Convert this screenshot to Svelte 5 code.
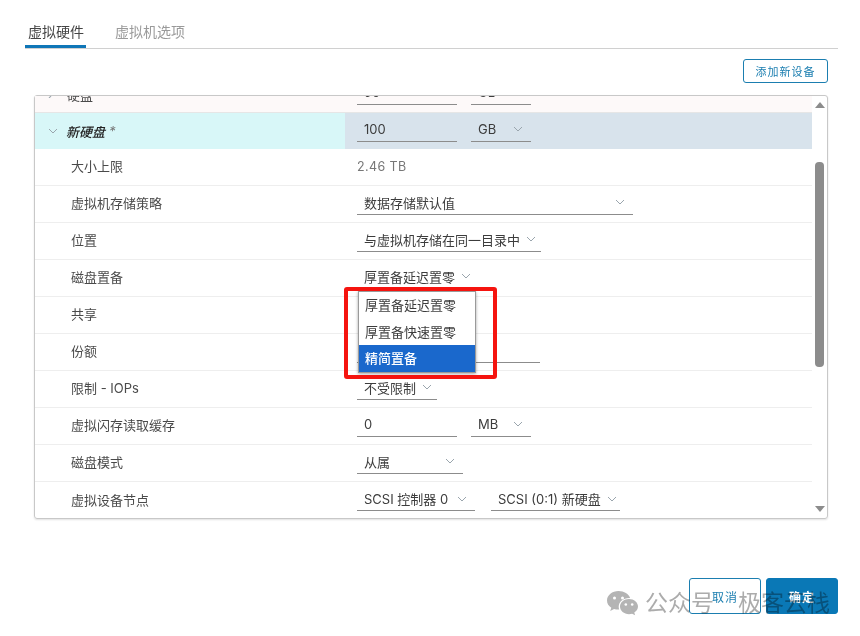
<script lang="ts">
  // Row data for the hardware list; each control is { text, width, chevron?, tight?, noline?, offset? }
  const rows = [
    { label: '大小上限', plain: '2.46 TB' },
    { label: '虚拟机存储策略', controls: [{ text: '数据存储默认值', width: 276, chevron: true }] },
    { label: '位置', controls: [{ text: '与虚拟机存储在同一目录中', width: 184, chevron: true, tight: true }] },
    { label: '磁盘置备', controls: [{ text: '厚置备延迟置零', width: 119, chevron: true, tight: true, noline: true }] },
    { label: '共享', controls: [] },
    { label: '份额', controls: [{ text: '', width: 183 }] },
    { label: '限制 - IOPs', controls: [{ text: '不受限制', width: 80, chevron: true, tight: true }] },
    {
      label: '虚拟闪存读取缓存',
      controls: [
        { text: '0', width: 100 },
        { text: 'MB', width: 60, chevron: true },
      ],
    },
    { label: '磁盘模式', controls: [{ text: '从属', width: 106, chevron: true }] },
    {
      label: '虚拟设备节点',
      controls: [
        { text: 'SCSI 控制器 0', width: 118, chevron: true },
        { text: 'SCSI (0:1) 新硬盘', width: 129, chevron: true, tight: true, offset: 2 },
      ],
    },
  ];
  const options = ['厚置备延迟置零', '厚置备快速置零', '精简置备'];
</script>

{#snippet chevron()}
  <svg class="chev" width="10" height="6" viewBox="0 0 10 6" aria-hidden="true">
    <path d="M1 1l4 4 4-4" fill="none" stroke="#9aa5ad" stroke-width="1" />
  </svg>
{/snippet}

{#snippet control(c)}
  <div
    class="ctl"
    class:tight={c.tight}
    class:noline={c.noline}
    style="width: {c.width}px; margin-left: {c.offset ?? 0}px"
  >
    <span>{c.text}</span>
    {#if c.chevron}{@render chevron()}{/if}
  </div>
{/snippet}

<div class="page">
  <nav class="tabs">
    <div class="tab on">虚拟硬件</div>
    <div class="tab">虚拟机选项</div>
  </nav>

  <div class="toolbar">
    <button class="btn small">添加新设备</button>
  </div>

  <div class="panel">
    <div class="list">
      <div class="row clipped">
        <div class="cell-label head-label"><span class="arrow-r">›</span>硬盘 *</div>
        <div class="cell-value">
          {@render control({ text: '90', width: 100 })}
          {@render control({ text: 'GB', width: 60 })}
        </div>
      </div>

      <div class="row selected">
        <div class="cell-label head-label">
          {@render chevron()}
          <em>新硬盘</em><i class="star">*</i>
        </div>
        <div class="cell-value">
          {@render control({ text: '100', width: 100 })}
          {@render control({ text: 'GB', width: 60, chevron: true })}
        </div>
      </div>

      {#each rows as r}
        <div class="row">
          <div class="cell-label">{r.label}</div>
          <div class="cell-value">
            {#if r.plain}
              <span class="plain">{r.plain}</span>
            {:else}
              {#each r.controls as c}
                {@render control(c)}
              {/each}
            {/if}
          </div>
        </div>
      {/each}
    </div>

    <div class="scrollbar">
      <span class="tri up"></span>
      <div class="track"><div class="thumb"></div></div>
      <span class="tri down"></span>
    </div>

    <div class="popup">
      {#each options as o, i}
        <div class="opt" class:active={i === 2}>{o}</div>
      {/each}
    </div>
    <div class="redbox"></div>
  </div>

  <footer class="foot">
    <button class="btn big">取消</button>
    <button class="btn big primary">确定</button>
  </footer>

  <div class="watermark">
    <svg width="31" height="25" viewBox="0 0 31 25" aria-hidden="true">
      <path fill="#b4b4b4" d="M11.5 0C5.2 0 0 4.2 0 9.5c0 3 1.700 5.600 4.300 7.300L3.200 20l3.900-2c1.300.4 2.700.6 4.100.6l1 0c-.3-.9-.5-1.800-.5-2.800 0-4.900 4.700-8.800 10.400-8.800l1 0C21.900 2.900 17.100 0 11.500 0z" />
      <path fill="#b4b4b4" d="M22 8c-5 0-9 3.400-9 7.600s4 7.600 9 7.600c1.100 0 2.100-.2 3.100-.5l3 1.600-.8-2.700c2.200-1.400 3.700-3.500 3.700-6C31 11.400 27 8 22 8z" />
      <circle cx="7.500" cy="7" r="1.500" fill="#fff" />
      <circle cx="15.500" cy="7" r="1.500" fill="#fff" />
      <circle cx="18.800" cy="13.500" r="1.300" fill="#fff" />
      <circle cx="25.200" cy="13.500" r="1.300" fill="#fff" />
    </svg>
    <span>公众号</span><span class="wm-gap"></span><span>极客云栈</span>
  </div>
</div>

<style>
  :global(body) {
    margin: 0;
    background: #fff;
  }
  .page {
    position: relative;
    width: 860px;
    height: 636px;
    overflow: hidden;
    background: #fff;
    font-family: Inter, 'Noto Sans CJK SC', sans-serif;
    font-size: 13px;
    color: #4a4a4a;
    white-space: nowrap;
    filter: blur(0.3px);
  }
  .tabs {
    display: flex;
    gap: 26px;
    margin: 0 22px 0 25px;
    padding-top: 19px;
    height: 29px;
    border-bottom: 1px solid #d0d0d0;
  }
  .tab {
    padding: 0 3px;
    height: 29px;
    line-height: 26px;
    font-size: 14px;
    color: #9a9a9a;
    box-sizing: border-box;
  }
  .tab.on {
    width: 61px;
    color: #444;
    border-bottom: 3px solid #0f76b7;
  }
  .toolbar {
    display: flex;
    justify-content: flex-end;
    padding: 10px 32px 0 0;
    height: 36px;
  }
  .btn {
    font-family: inherit;
    border: 1px solid #1b7eb0;
    border-radius: 3px;
    background: #fff;
    color: #1b7eb0;
    padding: 0;
    cursor: pointer;
  }
  .btn.small {
    width: 85px;
    height: 24px;
    font-size: 11px;
    letter-spacing: 1px;
  }
  .btn.big {
    width: 72px;
    height: 36px;
    font-size: 12px;
    letter-spacing: 1px;
  }
  .btn.primary {
    background: #0a78b6;
    border-color: #0a78b6;
    color: #fff;
    font-weight: 700;
  }
  .panel {
    position: relative;
    display: flex;
    box-sizing: border-box;
    width: 794px;
    height: 424px;
    margin-left: 34px;
    border: 1px solid #c8c8c8;
    border-radius: 3px;
    box-shadow: 0 1px 2px rgba(0, 0, 0, 0.12);
  }
  .list {
    width: 777px;
    flex: none;
    overflow: hidden;
  }
  .row {
    display: flex;
    align-items: center;
    height: 37px;
    box-sizing: border-box;
    border-bottom: 1px solid #eeeeee;
  }
  .row:last-child {
    border-bottom: none;
  }
  .row.clipped {
    height: 17px;
    align-items: flex-end;
    overflow: hidden;
    background: #fdf9f9;
    border-bottom: 1px solid #e6e6e6;
  }
  .row.clipped .cell-label,
  .row.clipped .cell-value {
    height: 36px;
    flex: none;
  }
  .row.clipped .cell-value {
    width: 467px;
  }
  .arrow-r {
    margin: 0 14px 0 0;
    color: #9aa5ad;
  }
  .row.selected {
    background: #d8e3ec;
    border-bottom: none;
    height: 36px;
  }
  .cell-label {
    width: 310px;
    height: 100%;
    box-sizing: border-box;
    flex: none;
    display: flex;
    align-items: center;
    padding: 0 0 3px 36px;
  }
  .head-label {
    padding: 0 0 0 13px;
  }
  .selected .cell-label {
    background: #d8f7f8;
    color: #222;
  }
  .selected .cell-label em {
    margin-left: 8px;
    font-weight: 500;
  }
  .star {
    margin-left: 4px;
    color: #777;
  }
  .cell-value {
    flex: 1;
    display: flex;
    align-items: center;
    gap: 14px;
    padding-left: 12px;
    height: 100%;
  }
  .plain {
    color: #777;
    font-size: 12.500px;
    letter-spacing: 0.4px;
    margin-bottom: 1px;
  }
  .ctl {
    display: flex;
    align-items: center;
    justify-content: space-between;
    box-sizing: border-box;
    height: 24px;
    margin-bottom: 3px;
    padding: 0 8px 0 7px;
    border-bottom: 1px solid #8c8c8c;
    color: #3c3c3c;
  }
  .ctl.tight {
    justify-content: flex-start;
    gap: 6px;
  }
  .ctl.noline {
    border-bottom-color: transparent;
  }
  .chev {
    flex: none;
  }
  .scrollbar {
    flex: 1;
    display: flex;
    flex-direction: column;
    align-items: center;
    padding: 6px 0 6px;
  }
  .tri {
    width: 0;
    height: 0;
    border-left: 5px solid transparent;
    border-right: 5px solid transparent;
    flex: none;
  }
  .tri.up {
    border-bottom: 6px solid #8c8c8c;
  }
  .tri.down {
    border-top: 6px solid #8c8c8c;
  }
  .track {
    flex: 1;
    width: 9px;
    padding-top: 54px;
  }
  .thumb {
    height: 205px;
    border-radius: 4px;
    background: #8c8c8c;
  }
  .popup {
    position: absolute;
    left: 323px;
    top: 195px;
    width: 118px;
    height: 82px;
    box-sizing: border-box;
    background: #fff;
    border: 1px solid #9a9a9a;
    box-shadow: 0 1px 3px rgba(0, 0, 0, 0.35);
    display: flex;
    flex-direction: column;
  }
  .opt {
    height: 26.500px;
    line-height: 26px;
    padding-left: 6px;
    color: #3c3c3c;
  }
  .opt.active {
    flex: 1;
    line-height: 27px;
    background: #1a68cc;
    color: #fff;
    font-weight: 500;
  }
  .redbox {
    position: absolute;
    left: 309px;
    top: 191px;
    width: 153px;
    height: 92px;
    box-sizing: border-box;
    border: 4px solid #f5140f;
    border-radius: 3px;
    pointer-events: none;
  }
  .foot {
    position: absolute;
    right: 22px;
    top: 578px;
    display: flex;
    gap: 5px;
  }
  .watermark {
    position: absolute;
    left: 607px;
    top: 589px;
    display: flex;
    align-items: center;
    font-size: 23px;
    line-height: 28px;
    color: #acacac;
    mix-blend-mode: multiply;
    pointer-events: none;
  }
  .watermark svg {
    margin-right: 7px;
  }
  .wm-gap {
    width: 24px;
  }
</style>
